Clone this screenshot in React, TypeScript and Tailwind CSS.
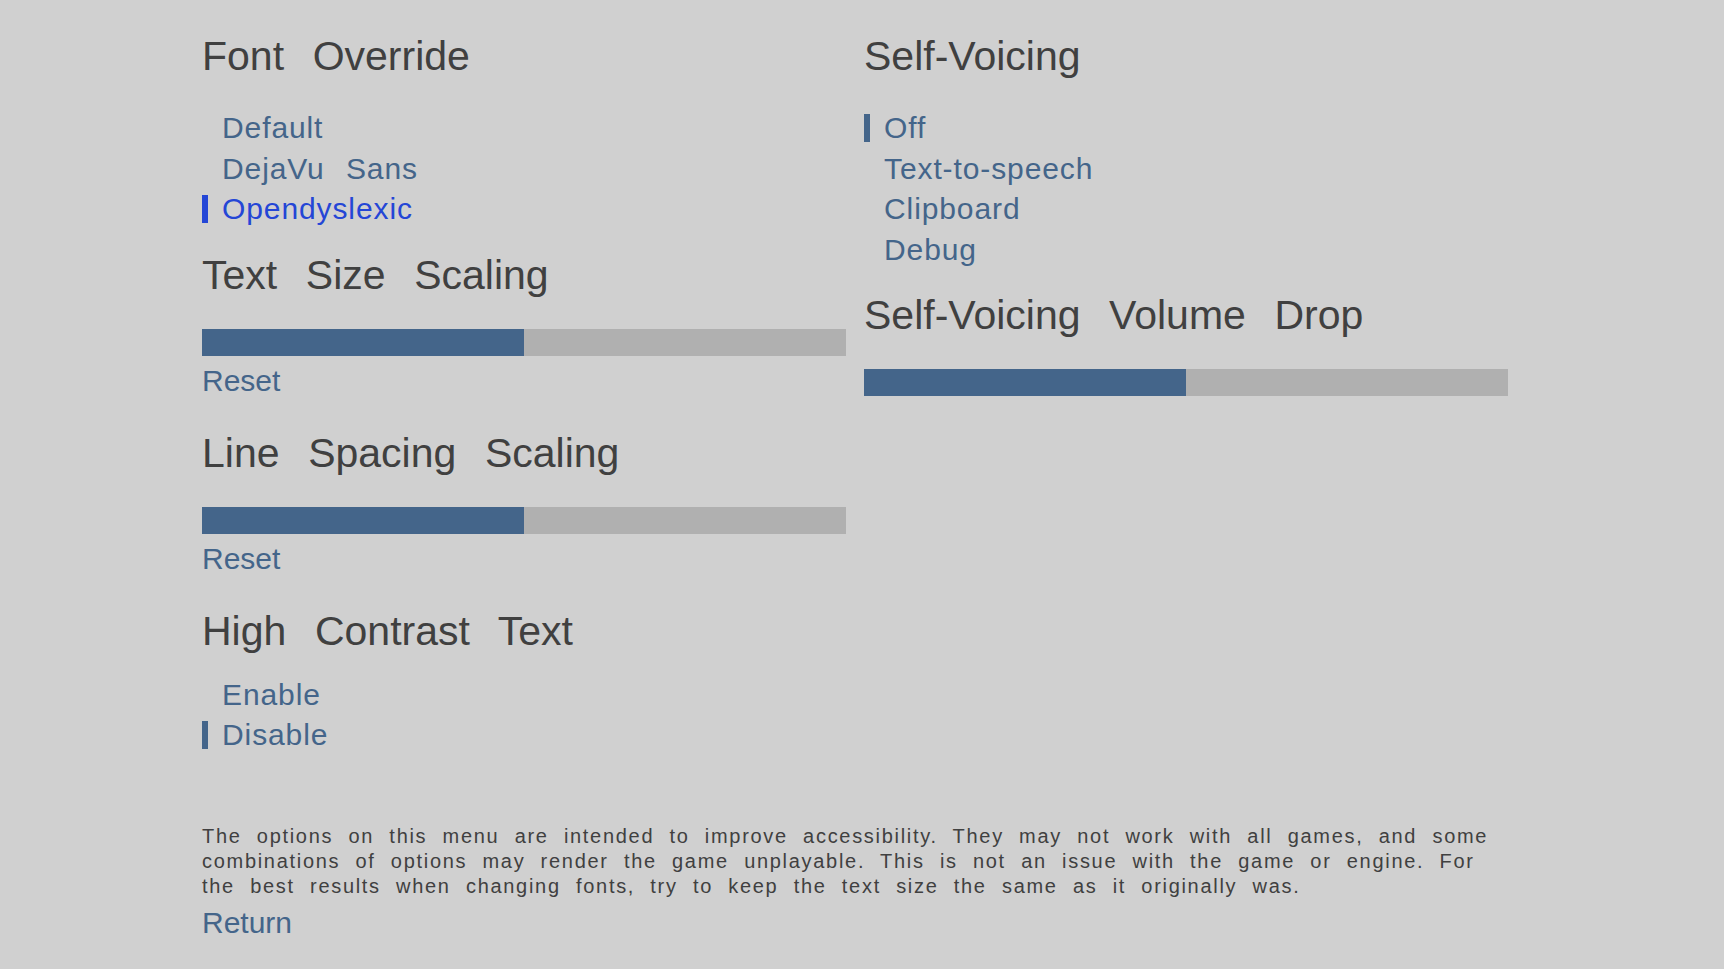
import React from 'react';

type Choice = { label: string; selected?: boolean; hover?: boolean };

const Heading: React.FC<{ children: React.ReactNode; className?: string }> = ({ children, className = '' }) => (
  <h2 className={`text-[41px] leading-[46px] text-[#404040] [word-spacing:0.42em] ${className}`}>{children}</h2>
);

const ChoiceList: React.FC<{ items: Choice[]; className?: string }> = ({ items, className = '' }) => (
  <div className={`flex flex-col ${className}`}>
    {items.map((item) => (
      <div key={item.label} className="flex items-center h-[40.5px]">
        <div
          className={`w-[6px] h-[28px] ${
            item.selected ? (item.hover ? 'bg-[#2446d6]' : 'bg-[#44658a]') : 'bg-transparent'
          }`}
        />
        <span
          className={`pl-[14px] text-[30px] leading-[40.5px] tracking-[0.9px] [word-spacing:0.4em] ${
            item.hover ? 'text-[#2446d6]' : 'text-[#44658a]'
          }`}
        >
          {item.label}
        </span>
      </div>
    ))}
  </div>
);

const Bar: React.FC<{ value: number; className?: string }> = ({ value, className = '' }) => (
  <div className={`w-full h-[27px] bg-[#b0b0b0] flex ${className}`}>
    <div className="h-full bg-[#44658a]" style={{ width: `${value}%` }} />
  </div>
);

const TextButton: React.FC<{ children: React.ReactNode; className?: string }> = ({ children, className = '' }) => (
  <div className={`text-[30px] leading-[40.5px] text-[#44658a] ${className}`}>{children}</div>
);

export default function App() {
  return (
    <div
      className="w-full h-[969px] bg-[#d0d0d0] flex flex-col pl-[202px] pt-[33px] pb-[26px] overflow-hidden"
      style={{ fontFamily: '"Liberation Sans", Arial, sans-serif' }}
    >
      <div className="grid grid-cols-[644px_644px] gap-x-[18px] items-start">
        {/* Left column */}
        <div className="flex flex-col">
          <Heading>Font Override</Heading>
          <ChoiceList
            className="mt-[29px]"
            items={[
              { label: 'Default' },
              { label: 'DejaVu Sans' },
              { label: 'Opendyslexic', selected: true, hover: true },
            ]}
          />
          <Heading className="mt-[22px]">Text Size Scaling</Heading>
          <Bar value={50} className="mt-[31px]" />
          <TextButton className="mt-[5px]">Reset</TextButton>
          <Heading className="mt-[29px]">Line Spacing Scaling</Heading>
          <Bar value={50} className="mt-[31px]" />
          <TextButton className="mt-[5px]">Reset</TextButton>
          <Heading className="mt-[28px]">High Contrast Text</Heading>
          <ChoiceList
            className="mt-[21px]"
            items={[{ label: 'Enable' }, { label: 'Disable', selected: true }]}
          />
        </div>

        {/* Right column */}
        <div className="flex flex-col">
          <Heading>Self-Voicing</Heading>
          <ChoiceList
            className="mt-[29px]"
            items={[
              { label: 'Off', selected: true },
              { label: 'Text-to-speech' },
              { label: 'Clipboard' },
              { label: 'Debug' },
            ]}
          />
          <Heading className="mt-[22px]">Self-Voicing Volume Drop</Heading>
          <Bar value={50} className="mt-[31px]" />
        </div>
      </div>

      {/* Footer */}
      <div className="mt-auto flex flex-col">
        <p className="text-[20px] leading-[25px] text-[#404040] tracking-[1.7px] [word-spacing:8px] whitespace-nowrap">
          The options on this menu are intended to improve accessibility. They may not work with all games, and some
          <br />
          combinations of options may render the game unplayable. This is not an issue with the game or engine. For
          <br />
          the best results when changing fonts, try to keep the text size the same as it originally was.
        </p>
        <TextButton className="mt-[4px]">Return</TextButton>
      </div>
    </div>
  );
}
